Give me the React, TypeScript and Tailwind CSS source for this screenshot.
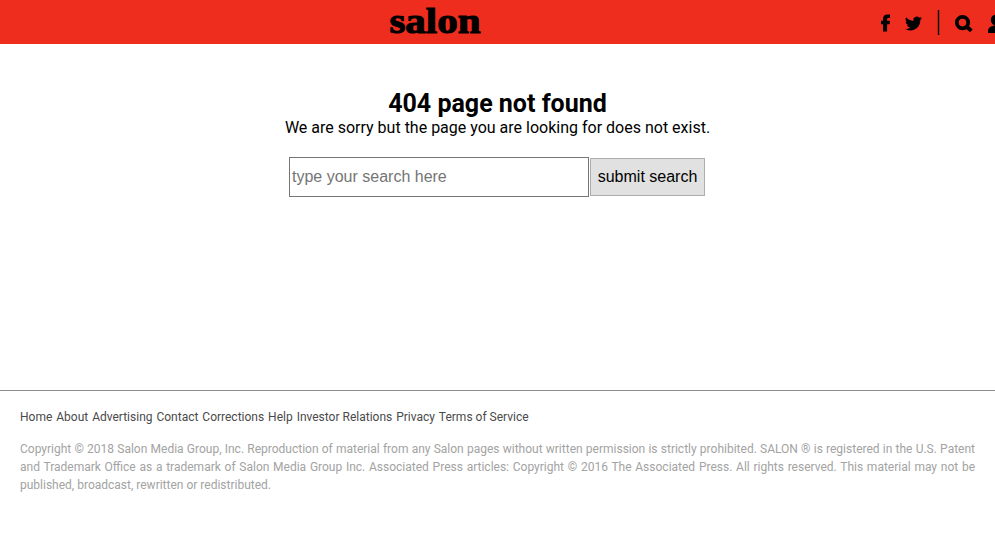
const links = ["Home", "About", "Advertising", "Contact", "Corrections", "Help", "Investor Relations", "Privacy", "Terms of Service"];

function Logo() {
  return (
    <svg className="ml-[388px] h-11 w-[96px] shrink-0" viewBox="0 0 96 44" aria-label="salon">
      <text x="1.4" y="33.4" textLength="91.2" lengthAdjust="spacingAndGlyphs" stroke="#000" strokeWidth="1.1" className="font-['Liberation_Serif',serif] text-[36px] font-bold">
        salon
      </text>
    </svg>
  );
}

function HeaderIcons() {
  return (
    <svg className="ml-auto h-11 w-[125px] shrink-0" viewBox="870 0 125 44" aria-hidden="true">
      <path d="M883 31.5V24.3H881V20.8H883V18.9C883 16 884.8 14.5 887.3 14.5H890V18H888.4C887.5 18 887.1 18.5 887.1 19.3V20.8H890L889.6 24.3H887.1V31.5Z" />
      <path transform="translate(905 15) scale(.71)" d="M23.95 4.57a10 10 0 0 1-2.82.77 4.96 4.96 0 0 0 2.16-2.72 9.9 9.9 0 0 1-3.12 1.18 4.92 4.92 0 0 0-8.38 4.48C7.69 8.1 4.07 6.13 1.64 3.16a4.92 4.92 0 0 0 1.52 6.57 4.9 4.9 0 0 1-2.23-.61v.06a4.92 4.92 0 0 0 3.95 4.83 5 5 0 0 1-2.21.08 4.94 4.94 0 0 0 4.6 3.42A9.87 9.87 0 0 1 0 19.54a14 14 0 0 0 7.55 2.21c9.05 0 14-7.5 14-13.99l-.02-.63a10 10 0 0 0 2.42-2.56z" />
      <path d="M937.8 10h1.4v25h-1.4z" />
      <circle cx="962.5" cy="22.6" r="5.7" fill="none" stroke="#000" strokeWidth="3.8" />
      <path d="M966.3 26.3l5 4.6" fill="none" stroke="#000" strokeWidth="4" />
      <circle cx="996.3" cy="20" r="5.5" />
      <path d="M988 33v-2.2c0-2.6 2.2-4.4 5-4.8l2-.7h1V33z" />
    </svg>
  );
}

export default function App() {
  return (
    <div className="flex h-[533px] w-full flex-col overflow-hidden bg-white font-[Roboto,sans-serif] text-black">
      <header className="flex h-11 shrink-0 bg-[#ee2d1f]">
        <Logo />
        <HeaderIcons />
      </header>
      <main className="flex h-[346px] shrink-0 flex-col items-center pt-[45px]">
        <h1 className="text-[25px] leading-[29px] font-bold">404 page not found</h1>
        <p className="text-base leading-[19px]">We are sorry but the page you are looking for does not exist.</p>
        <form className="mt-5 flex items-center gap-px pr-px font-['Liberation_Sans',sans-serif] text-base">
          <input placeholder="type your search here" className="h-10 w-[300px] border border-[#767676] bg-white px-0.5 placeholder:text-[#757575]" />
          <button type="button" className="h-[38px] w-[115px] border border-[#adadad] bg-[#e1e1e1] whitespace-nowrap">submit search</button>
        </form>
      </main>
      <footer className="border-t border-[#8c8c8c] px-5 pt-[17px] text-xs leading-[18px]">
        <nav className="flex gap-[3.95px] text-[#4a4a4a]">
          {links.map((l) => <a key={l}>{l}</a>)}
        </nav>
        <p className="mt-3.5 text-justify text-[#a3a3a3]">
          Copyright © 2018 Salon Media Group, Inc. Reproduction of material from any Salon pages without written permission is strictly prohibited. SALON ® is registered in the U.S. Patent and Trademark Office as a trademark of Salon Media Group Inc. Associated Press articles: Copyright © 2016 The Associated Press. All rights reserved. This material may not be published, broadcast, rewritten or redistributed.
        </p>
      </footer>
    </div>
  );
}
